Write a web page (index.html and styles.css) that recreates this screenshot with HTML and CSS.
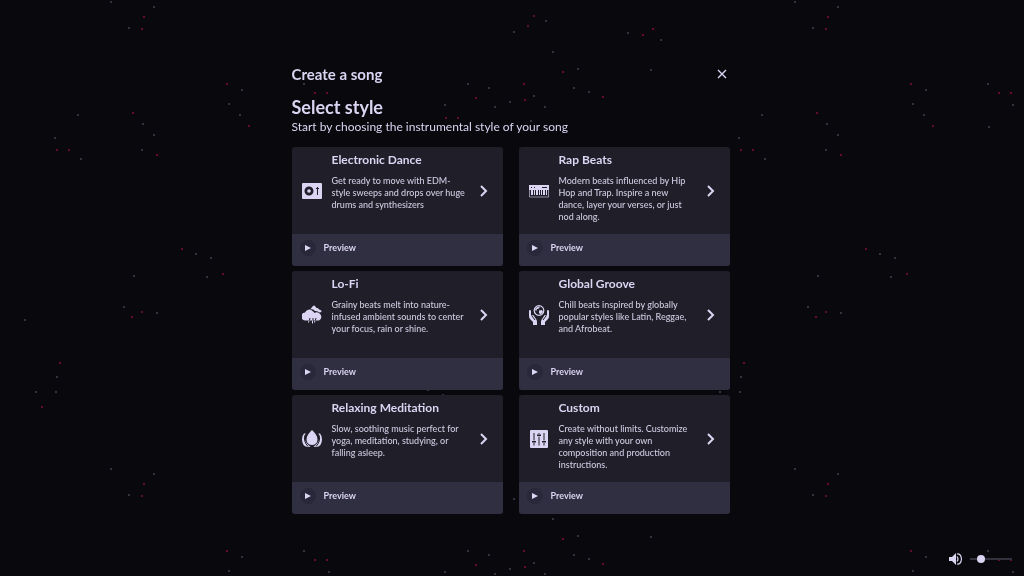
FILE: index.html
```html
<!DOCTYPE html>
<html lang="en">

<head>
    <meta charset="UTF-8">
    <meta name="viewport" content="width=device-width, initial-scale=1.0">
    <title>Create a song</title>
    <link rel="stylesheet" href="styles.css">
</head>

<body>
    <svg class="stars" aria-hidden="true">
        <defs>
            <pattern id="starTile" width="684" height="467" patternUnits="userSpaceOnUse">
                <path class="star-gray" d="M110 2h2M153 7h2M128 28h2M241 90h2M228 104h2M239 115h2M77 115h2M54 138h2M80 159h2M142 124h2M153 135h2M141 150h2M195 254h2M210 258h2M206 277h2M133 276h2M123 307h2M156 313h2M24 320h2M56 377h2M35 392h2M55 392h2M545 21h2M513 32h2M627 33h2M660 40h2M552 52h2M303 84h2M577 69h2M650 70h2M467 84h2M488 88h2M444 105h2M509 102h2M494 107h2M533 96h2M544 107h2M573 88h2M588 92h2M530 121h2M304 127h2M328 105h2M427 390h2M442 395h2" />
                <path class="star-red" d="M143 17h2M141 29h2M226 84h2M248 126h2M56 150h2M68 150h2M132 113h2M156 155h2M181 249h2M222 274h2M141 312h2M131 317h2M59 363h2M41 407h2M533 16h2M527 26h2M642 35h2M652 29h2M314 93h2M326 93h2M562 72h2M475 98h2M523 84h2M524 100h2M602 97h2M445 118h2M457 118h2" />
            </pattern>
        </defs>
        <rect width="100%" height="100%" fill="url(#starTile)" />
    </svg>

    <main class="dialog">
        <header class="dialog-header">
            <h1>Create a song</h1>
            <button class="close-btn" aria-label="Close">
                <svg viewBox="0 0 10 10"><path d="M1 1l8 8M9 1l-8 8" /></svg>
            </button>
        </header>

        <h2>Select style</h2>
        <p class="subtitle">Start by choosing the instrumental style of your song</p>

        <div class="styles">
            <article class="card">
                <div class="card-body">
                    <svg class="card-icon" viewBox="0 0 20 20">
                        <path fill-rule="evenodd" d="M1 2h18q1 0 1 1v14q0 1-1 1H1q-1 0-1-1V3q0-1 1-1zM7 5.500a4.500 4.500 0 1 0 0 9a4.500 4.500 0 1 0 0-9z" />
                        <circle cx="7" cy="10" r="1.800" />
                        <path class="cut-line thin" d="M15.500 6v8M14 7.500h3" />
                    </svg>
                    <div class="card-text">
                        <h3>Electronic Dance</h3>
                        <p>Get ready to move with EDM-style sweeps and drops over huge drums and synthesizers</p>
                    </div>
                    <button class="next-btn" aria-label="Choose Electronic Dance">
                        <svg viewBox="0 0 8 12"><path d="M1 1l5 5l-5 5" /></svg>
                    </button>
                </div>
                <div class="card-footer">
                    <button class="preview-btn"><span class="play"><svg viewBox="0 0 6 6"><path d="M0 0l6 3l-6 3z" /></svg></span>Preview</button>
                </div>
            </article>

            <article class="card">
                <div class="card-body">
                    <svg class="card-icon" viewBox="0 0 20 20">
                        <path d="M0 4h20v5H0z" />
                        <path class="line keys" d="M.5 9v7h19V9" />
                        <path class="cut-line thin" d="M2 6.500h1M5 6.500h1M13 6.500h5" />
                        <path d="M2 9h2v5H2zM5 9h1v5H5zM7 9h2v5H7zM10 9h1v5h-1zM12 9h1v5h-1zM14 9h2v5h-2zM17 9h1v5h-1z" />
                    </svg>
                    <div class="card-text">
                        <h3>Rap Beats</h3>
                        <p>Modern beats influenced by Hip Hop and Trap. Inspire a new dance, layer your verses, or just nod along.</p>
                    </div>
                    <button class="next-btn" aria-label="Choose Rap Beats">
                        <svg viewBox="0 0 8 12"><path d="M1 1l5 5l-5 5" /></svg>
                    </button>
                </div>
                <div class="card-footer">
                    <button class="preview-btn"><span class="play"><svg viewBox="0 0 6 6"><path d="M0 0l6 3l-6 3z" /></svg></span>Preview</button>
                </div>
            </article>

            <article class="card">
                <div class="card-body">
                    <svg class="card-icon" viewBox="0 0 20 20">
                        <path d="M8.500 4l2.500-3q1-1 2 0l1.500 2q2-.5 2.500 1.500q2.500 0 2.500 2.500l-2 .5q-2-2-4.500-1.500q-1.500-2-4.500-2z" />
                        <path d="M4 15.500a4 4 0 0 1-1-8a4.500 4.500 0 0 1 7.500-1.500q1.500.8 2 2q2.500-1.500 5 .5a4 4 0 0 1-.5 7z" />
                        <path class="cut-line thin" d="M8 13l-.8 3M11 13v3M14 13l-.8 3" />
                        <path class="line thin" d="M7 15.500l-.5 2M10.500 15.500v3M13 15.500l-.5 2" />
                    </svg>
                    <div class="card-text">
                        <h3>Lo-Fi</h3>
                        <p>Grainy beats melt into nature-infused ambient sounds to center your focus, rain or shine.</p>
                    </div>
                    <button class="next-btn" aria-label="Choose Lo-Fi">
                        <svg viewBox="0 0 8 12"><path d="M1 1l5 5l-5 5" /></svg>
                    </button>
                </div>
                <div class="card-footer">
                    <button class="preview-btn"><span class="play"><svg viewBox="0 0 6 6"><path d="M0 0l6 3l-6 3z" /></svg></span>Preview</button>
                </div>
            </article>

            <article class="card">
                <div class="card-body">
                    <svg class="card-icon" viewBox="0 0 20 20">
                        <circle class="line" cx="10" cy="5.500" r="4.800" />
                        <path d="M6 4q2-3 5-2.500l-1 2l-2 .5l-1 2.500zM10 5.500l3-.5l1 2l-2.500 2.500l-1.500-1.500z" />
                        <path d="M0 6q0-1 1-1t1 1v4l1 1q1-2 2 0l2 3q1 1 1 3v3H4v-3l-3-3q-1-1-1-3zM20 6q0-1-1-1t-1 1v4l-1 1q-1-2-2 0l-2 3q-1 1-1 3v3h4v-3l3-3q1-1 1-3z" />
                        <path class="cut-line thin" d="M3 11l3 4M17 11l-3 4" />
                    </svg>
                    <div class="card-text">
                        <h3>Global Groove</h3>
                        <p>Chill beats inspired by globally popular styles like Latin, Reggae, and Afrobeat.</p>
                    </div>
                    <button class="next-btn" aria-label="Choose Global Groove">
                        <svg viewBox="0 0 8 12"><path d="M1 1l5 5l-5 5" /></svg>
                    </button>
                </div>
                <div class="card-footer">
                    <button class="preview-btn"><span class="play"><svg viewBox="0 0 6 6"><path d="M0 0l6 3l-6 3z" /></svg></span>Preview</button>
                </div>
            </article>

            <article class="card">
                <div class="card-body">
                    <svg class="card-icon" viewBox="0 0 20 20">
                        <path d="M3.500 4.500q-2.500 6 1.500 10l3.500 3.500h-3q-5.500-1-5.500-7.500q0-4 2-6zM16.500 4.500q2.500 6-1.500 10l-3.500 3.500h3q5.500-1 5.500-7.500q0-4-2-6z" />
                        <path class="cut-line thin" d="M3 6q-2 6 3 11.500M17 6q2 6-3 11.500" />
                        <path d="M10 1q5.500 5 5.500 9.500a5.500 5.500 0 0 1-11 0q0-4.500 5.500-9.500z" />
                    </svg>
                    <div class="card-text">
                        <h3>Relaxing Meditation</h3>
                        <p>Slow, soothing music perfect for yoga, meditation, studying, or falling asleep.</p>
                    </div>
                    <button class="next-btn" aria-label="Choose Relaxing Meditation">
                        <svg viewBox="0 0 8 12"><path d="M1 1l5 5l-5 5" /></svg>
                    </button>
                </div>
                <div class="card-footer">
                    <button class="preview-btn"><span class="play"><svg viewBox="0 0 6 6"><path d="M0 0l6 3l-6 3z" /></svg></span>Preview</button>
                </div>
            </article>

            <article class="card">
                <div class="card-body">
                    <svg class="card-icon" viewBox="0 0 20 20">
                        <rect x="1" y="1" width="18" height="18" rx="1" />
                        <path class="cut-line thin" d="M5 4v7.500M5 14v2.500M10 4v1M10 7.500v9M15 4v7.500M15 14v2.500" />
                        <path class="cut-line" d="M3 12.800h4M8 6.200h4M13 12.800h4" />
                    </svg>
                    <div class="card-text">
                        <h3>Custom</h3>
                        <p>Create without limits. Customize any style with your own composition and production instructions.</p>
                    </div>
                    <button class="next-btn" aria-label="Choose Custom">
                        <svg viewBox="0 0 8 12"><path d="M1 1l5 5l-5 5" /></svg>
                    </button>
                </div>
                <div class="card-footer">
                    <button class="preview-btn"><span class="play"><svg viewBox="0 0 6 6"><path d="M0 0l6 3l-6 3z" /></svg></span>Preview</button>
                </div>
            </article>
        </div>
    </main>

    <div class="volume">
        <label for="volumeSlider" aria-label="Volume">
            <svg viewBox="0 0 14 12">
                <path d="M0 4h3l4-4v12l-4-4H0z" />
                <path class="line" d="M8 3.500q2 2.500 0 5M8 1q4-.5 4.500 5q-.5 5.500-4.500 5" />
            </svg>
        </label>
        <input type="range" id="volumeSlider" min="0" max="100" value="22">
    </div>
</body>

</html>
```
FILE: styles.css
```css
:root {
    --bg-color: #09090d;
    --card-color: #201f29;
    --footer-color: #302e41;
    --play-color: #29273a;
    --text-color: #dbd5f3;
    --body-color: #cfcae2;
}

* {
    margin: 0;
    padding: 0;
    box-sizing: border-box;
}

body {
    font-family: Lato, "Open Sans", sans-serif;
    background: var(--bg-color);
    color: var(--text-color);
    min-height: 100vh;
    padding: 63px 3px 0 0;
}

button {
    background: none;
    border: none;
    color: inherit;
    font: inherit;
    cursor: pointer;
}

svg {
    display: block;
    fill: var(--text-color);
}

.line {
    fill: none;
    stroke: var(--text-color);
    stroke-width: 1.2;
}

.cut-line {
    fill: none;
    stroke: var(--card-color);
    stroke-width: 1.4;
}

.thin {
    stroke-width: 1;
}

.keys {
    stroke-width: 1;
    opacity: 0.6;
}

/* background */
.stars {
    position: fixed;
    inset: 0;
    width: 100%;
    height: 100%;
    z-index: -1;
}

.star-gray {
    stroke: #33333f;
    stroke-width: 2;
}

.star-red {
    stroke: #620d2b;
    stroke-width: 2;
}

.dialog {
    width: 90%;
    max-width: 438px;
    margin: 0 auto;
}

.dialog-header {
    display: flex;
    justify-content: space-between;
    align-items: center;
    height: 22px;
}

h1 {
    font-size: 15px;
    line-height: 20px;
}

.close-btn {
    padding: 3px;
}

.close-btn svg {
    width: 10px;
    height: 10px;
    stroke: var(--text-color);
    stroke-width: 1.4;
}

h2 {
    margin-top: 10px;
    font-size: 18px;
    font-weight: 700;
    line-height: 24px;
}

.subtitle {
    margin-bottom: 13px;
    font-size: 12px;
    line-height: 15px;
}

/* cards */
.styles {
    display: grid;
    grid-template-columns: 1fr 1fr;
    gap: 5px 16px;
}

.card {
    background: var(--card-color);
    border-radius: 3px;
    overflow: hidden;
}

.card-body {
    display: flex;
    align-items: center;
    gap: 10px;
    min-height: 87px;
    padding: 0 15px 0 10px;
}

.card-icon {
    flex: none;
    width: 20px;
    height: 20px;
}

.card-text {
    flex: 1;
    align-self: flex-start;
    padding: 5px 4px 0 0;
}

h3 {
    margin-bottom: 7px;
    font-size: 12px;
    line-height: 16px;
}

.card-text p {
    color: var(--body-color);
    font-size: 9px;
    font-weight: 500;
    line-height: 12px;
}

.next-btn svg {
    width: 8px;
    height: 12px;
    fill: none;
    stroke: var(--text-color);
    stroke-width: 2;
}

.card-footer {
    background: var(--footer-color);
    height: 32px;
    padding: 6px 8px;
}

.preview-btn {
    display: flex;
    align-items: center;
    gap: 8px;
    font-size: 9px;
    font-weight: 700;
    line-height: 16px;
}

.play {
    display: grid;
    place-items: center;
    width: 16px;
    height: 16px;
    border-radius: 50%;
    background: var(--play-color);
}

.play svg {
    width: 6px;
    height: 6px;
}

/* volume */
.volume {
    position: fixed;
    right: 12px;
    bottom: 10px;
    display: flex;
    align-items: center;
    gap: 7px;
}

.volume svg {
    width: 14px;
    height: 12px;
}

.volume input {
    appearance: none;
    width: 42px;
    height: 14px;
    background: linear-gradient(#32313e, #32313e) center / 100% 2px no-repeat;
}

.volume input::-webkit-slider-thumb {
    appearance: none;
    width: 8px;
    height: 8px;
    border-radius: 50%;
    background: var(--text-color);
}
```
